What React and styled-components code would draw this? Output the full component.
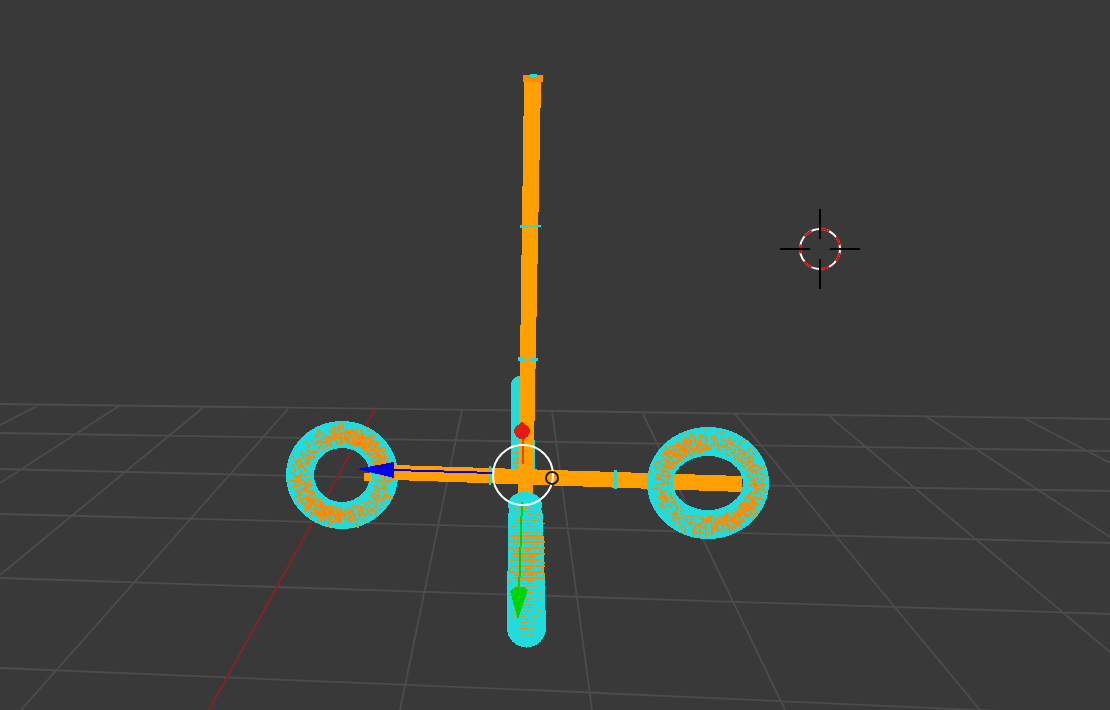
import React from 'react'
import styled, { createGlobalStyle } from 'styled-components'

const CYAN = '#22dcdc'
const ORANGE = '#ff9f00'
const DEEP = '#ff8a00'

const Global = createGlobalStyle`
  html, body { margin: 0; padding: 0; background: #393939; overflow: hidden; }
`
const Viewport = styled.main`
  width: 1110px;
  height: 710px;
  background: #393939;
`
const Scene = styled.svg`
  display: block;
  width: 100%;
  height: 100%;
`
const GridLine = styled.line`
  stroke: ${props => props.axis ? '#832327' : '#4c4c4c'};
  stroke-width: ${props => props.axis ? 2 : 1.8};
`
const Solid = styled.path`
  fill: ${props => props.color};
  shape-rendering: crispEdges;
`
const Stroke = styled.line`
  stroke: ${props => props.color};
  stroke-width: 2;
  shape-rendering: crispEdges;
`
const Ring = styled.circle`
  fill: none;
  stroke: ${props => props.color};
  stroke-width: ${props => props.width || 2};
  stroke-dasharray: ${props => props.dash || 'none'};
  stroke-dashoffset: ${props => props.offset || 0};
`

const horizontals = [
  [404, 411, 419], [433, 442, 451], [469, 482, 491],
  [514, 528, 543], [578, 596, 614], [668, 691, 716]
]
const fans = [
  [0, 425, 37, 406], [0, 483, 119, 406], [0, 575, 204, 407], [21, 710, 288, 409],
  [400, 710, 462, 410], [592, 710, 552, 411], [785, 710, 643, 414],
  [980, 710, 735, 414], [1110, 652, 829, 416], [1110, 537, 927, 417], [1110, 463, 1024, 418]
]

// small repeatable random so the speckle stays the same between renders
function makeRandom (seed) {
  let s = seed
  return () => {
    s = (s * 1664525 + 1013904223) % 4294967296
    return s / 4294967296
  }
}

const dot = (x, y, w = 2, h = 2) => `M${Math.round(x)} ${Math.round(y)}h${w}v${h}h${-w}z`

function ellipse (cx, cy, rx, ry) {
  return `M${cx - rx} ${cy}a${rx} ${ry} 0 1 0 ${rx * 2} 0a${rx} ${ry} 0 1 0 ${-rx * 2} 0z`
}

function torusSpeckle ({ cx, cy, rx, ry, hrx, hry, tilt, seed }) {
  const rand = makeRandom(seed)
  let d = ''
  const spokes = 116
  for (let i = 0; i < spokes; i++) {
    const a = (i / spokes) * Math.PI * 2
    const bias = Math.pow(0.5 + 0.5 * Math.cos(2 * (a - tilt)), 2)
    const reach = 0.72 + 0.27 * rand()
    const streak = i % 2 === 1 ? 0.45 : 1
    for (let t = 0.2; t < reach; t += 0.045) {
      const bell = 1.05 - Math.abs(t - 0.52) * 1.5
      if (rand() < bell * streak * (0.5 + 0.8 * bias)) {
        const x = cx + Math.cos(a) * (hrx + (rx - hrx) * t)
        const y = cy + Math.sin(a) * (hry + (ry - hry) * t)
        d += dot(x, y)
      }
    }
  }
  return d
}

function capsuleSpeckle () {
  const rand = makeRandom(41)
  let d = ''
  for (let y = 508; y < 638; y += 3) {
    const strong = y > 532 && y < 582
    const half = y > 618 ? 11 : 17
    for (let x = -half; x <= half; x += 2) {
      const fade = 1 - Math.abs(x) / (half + 2)
      const chance = strong ? (y % 6 === 1 ? fade + 0.5 : 0.6 * fade) : 0.65 * fade
      if (rand() < chance) d += dot(526 + x, y, 2, strong ? 2 : 1)
    }
  }
  return d
}

const verticalBar = 'M524 82H541L533 500H518Z'
const horizontalBar = 'M394 465L742 476V492L394 480Z'
const drop = 'M522 422C525 425 530 426 530 431C530 436 526 439 522 439C518 439 514 436 514 431C514 426 519 425 522 422Z'
const blueCone = 'M357 469L394 462V478Z'
const greenCone = 'M510 591L516 587H524L528 590L518 620Z'
const leftTorus = { cx: 342, cy: 475, rx: 56, ry: 54, hrx: 28, hry: 27, tilt: -1.1, seed: 7 }
const rightTorus = { cx: 708, cy: 483, rx: 61, ry: 56, hrx: 35, hry: 27, tilt: -2.2, seed: 19 }

function Torus ({ shape }) {
  const { cx, cy, rx, ry, hrx, hry } = shape
  return (
    <>
      <Solid color={CYAN} fillRule='evenodd' d={ellipse(cx, cy, rx, ry) + ellipse(cx, cy, hrx, hry)} />
      <Solid color={DEEP} d={torusSpeckle(shape)} />
    </>
  )
}

function Cursor ({ x, y }) {
  return (
    <g>
      <Ring cx={x} cy={y} r={20} color='#ffffff' />
      <Ring cx={x} cy={y} r={20} color='#e00000' dash='9 9' offset={-4} />
      <Stroke color='#000000' x1={x} y1={y - 40} x2={x} y2={y - 10} />
      <Stroke color='#000000' x1={x} y1={y + 10} x2={x} y2={y + 40} />
      <Stroke color='#000000' x1={x - 40} y1={y} x2={x - 10} y2={y} />
      <Stroke color='#000000' x1={x + 10} y1={y} x2={x + 40} y2={y} />
    </g>
  )
}

export default function App () {
  return (
    <Viewport>
      <Global />
      <Scene viewBox='0 0 1110 710'>
        {horizontals.map(([a, b, c]) => (
          <g key={a}>
            <GridLine x1={0} y1={a} x2={555} y2={b} />
            <GridLine x1={555} y1={b} x2={1110} y2={c} />
          </g>
        ))}
        {fans.map(([x1, y1, x2, y2]) => (
          <GridLine key={x2} x1={x1} y1={y1} x2={x2} y2={y2} />
        ))}
        <GridLine axis='true' x1={209} y1={710} x2={375} y2={409} />

        <Solid color={CYAN} d='M511 385a9 9 0 0 1 18 0V470H535a12 12 0 0 1 -24 0Z' />
        <Solid color={CYAN} d='M533 440h2v32h-2z' />
        <Solid color={DEEP} d={'M516 445h3v2h-3zM514 452h5v2h-5zM516 458h3v2h-3zM513 462h6v2h-6zM515 466h4v2h-4z'} />
        <Solid color={ORANGE} d={verticalBar} />
        <Solid color={DEEP} d='M523 75H543V82H523Z' />
        <Solid color={CYAN} d='M530 74h7v3h-7zM520 225h9v3h-9zM532 225h9v2h-9zM518 357h7v4h-7zM530 358h8v3h-8z' />

        <Torus shape={leftTorus} />
        <Solid color={ORANGE} d={horizontalBar} />
        <Solid color={ORANGE} d='M364 473h8v8h-8z' />
        <Solid color={CYAN} d='M489 466h2v19h-2zM614 470h3v19h-3z' />
        <Torus shape={rightTorus} />

        <Solid color={CYAN} d='M508 517a17 17 0 0 1 35 0L546 628a19 19 0 0 1 -39 0Z' />
        <Solid color={CYAN} d={ellipse(525, 505, 17, 13)} />
        <Solid color={DEEP} d={capsuleSpeckle()} />

        <Solid color='#ee4411' d='M522 438h2v26h-2z' />
        <Solid color='#e41a0e' d={drop} />
        <Solid color='#0000e6' d='M394 469L493 472V474L394 471Z' />
        <Solid color='#0000e6' d={blueCone} />
        <Solid color='#00d400' d='M521 502h2l-3 90h-2z' />
        <Solid color='#00d400' d={greenCone} />

        <Ring cx={523} cy={475} r={30} color='#ffffff' />
        <Ring cx={552} cy={478} r={6} color='#1a1a1a' />
        <Cursor x={820} y={249} />
      </Scene>
    </Viewport>
  )
}
